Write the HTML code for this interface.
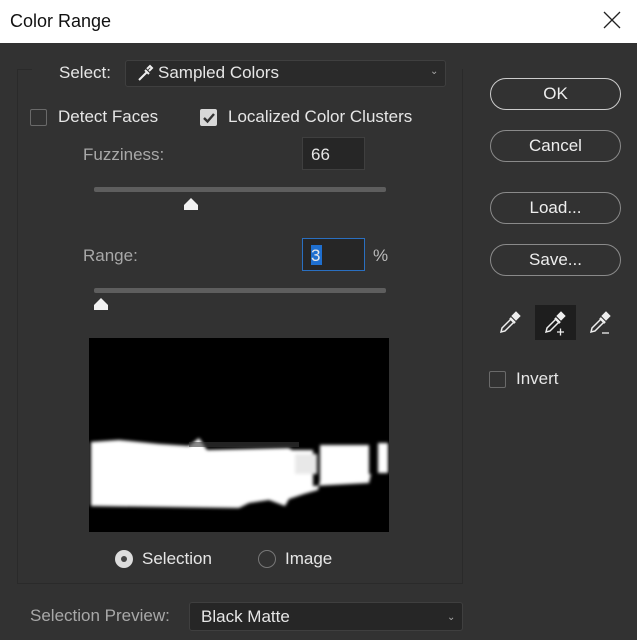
<!DOCTYPE html>
<html><head><style>
*{box-sizing:border-box;margin:0;padding:0}
body{width:637px;height:640px;background:#323232;font-family:"Liberation Sans",sans-serif;color:#e6e6e6;position:relative;overflow:hidden}
.a{position:absolute}
.t{font-size:17px;white-space:nowrap}
.btn{position:absolute;left:490px;width:131px;height:32px;border:1.5px solid #8a8a8a;border-radius:16px;text-align:center;line-height:29px;font-size:17px;color:#eee}
.cb{position:absolute;width:17px;height:17px;border:1px solid #6a6a6a;border-radius:2px}
.field{position:absolute;background:#262626;border:1px solid #3f3f3f}
</style></head><body>
<div class="a" style="left:0;top:0;width:637px;height:43px;background:#fff"></div>
<div class="a t" style="left:10px;top:11px;color:#111;font-size:18px">Color Range</div>
<svg class="a" style="left:603px;top:11px" width="18" height="18"><path d="M1 1L17 17M17 1L1 17" stroke="#222" stroke-width="1.3"/></svg>

<div class="a" style="left:17px;top:69px;width:446px;height:515px;border:1px solid #2a2a2a;border-top:none"></div>
<div class="a" style="left:17px;top:69px;width:15px;height:1px;background:#2a2a2a"></div>

<div class="a t" style="left:59px;top:63px">Select:</div>
<div class="field" style="left:125px;top:60px;width:321px;height:27px;border-radius:3px;background:#2a2a2a"></div>
<svg class="a" style="left:136px;top:64px" width="18" height="18"><path d="M3 16L11 8M9 6L13 10M11 5l3-3 2 2-3 3" stroke="#eee" stroke-width="2" fill="none"/></svg>
<div class="a t" style="left:158px;top:63px">Sampled Colors</div>
<div class="a" style="left:430px;top:66px;font-size:10px;color:#aaa">&#8964;</div>

<div class="cb" style="left:30px;top:109px"></div>
<div class="a t" style="left:58px;top:107px">Detect Faces</div>
<div class="cb" style="left:200px;top:109px;background:#d8d8d8;border-color:#d8d8d8"></div>
<svg class="a" style="left:201px;top:110px" width="16" height="16"><path d="M3 8l3.5 3.5L13 4" stroke="#333" stroke-width="2.4" fill="none"/></svg>
<div class="a t" style="left:228px;top:107px">Localized Color Clusters</div>

<div class="a t" style="left:83px;top:145px;color:#a8a8a8">Fuzziness:</div>
<div class="field" style="left:302px;top:137px;width:63px;height:33px"></div>
<div class="a t" style="left:311px;top:145px">66</div>
<div class="a" style="left:94px;top:187px;width:292px;height:5px;background:#5e5e5e;border-radius:2px"></div>
<svg class="a" style="left:183px;top:196px" width="16" height="15"><path d="M1 14V9L8 2L15 9V14Z" fill="#f2f2f2"/></svg>

<div class="a t" style="left:83px;top:246px;color:#a8a8a8">Range:</div>
<div class="field" style="left:302px;top:238px;width:63px;height:33px;border-color:#2a6fc0"></div>
<div class="a" style="left:311px;top:245px;width:11px;height:20px;background:#1f6fcf"></div>
<div class="a t" style="left:311px;top:246px">3</div>
<div class="a t" style="left:373px;top:246px;color:#bbb">%</div>
<div class="a" style="left:94px;top:288px;width:292px;height:5px;background:#5e5e5e;border-radius:2px"></div>
<svg class="a" style="left:93px;top:296px" width="16" height="15"><path d="M1 14V9L8 2L15 9V14Z" fill="#f2f2f2"/></svg>

<svg class="a" style="left:89px;top:338px" width="300" height="194">
<defs><filter id="b"><feGaussianBlur stdDeviation="1.6"/></filter></defs>
<rect width="300" height="194" fill="#000"/>
<g fill="#fff" filter="url(#b)">
<path d="M2 104L30 102L70 106L100 108L110 100L118 112L200 110L203 112L224 112V148L280 145L282 136L232 138L229 152L215 156L200 161L196 168L180 162L160 165L150 170L2 168Z"/>
<rect x="206" y="116" width="22" height="20" fill="#e8e8e8"/>
<rect x="231" y="107" width="49" height="38"/>
<rect x="289" y="105" width="10" height="30"/>
</g>
<g fill="#3a3a3a" opacity="0.6"><rect x="100" y="104" width="110" height="5"/></g>
</svg>

<div class="a" style="left:115px;top:550px;width:18px;height:18px;border-radius:50%;background:#ddd"></div>
<div class="a" style="left:121px;top:556px;width:6px;height:6px;border-radius:50%;background:#444"></div>
<div class="a t" style="left:142px;top:549px">Selection</div>
<div class="a" style="left:258px;top:550px;width:18px;height:18px;border-radius:50%;border:1px solid #777"></div>
<div class="a t" style="left:285px;top:549px">Image</div>

<div class="a t" style="left:30px;top:606px;color:#a8a8a8">Selection Preview:</div>
<div class="field" style="left:189px;top:602px;width:274px;height:29px;border-radius:3px"></div>
<div class="a t" style="left:201px;top:607px">Black Matte</div>
<div class="a" style="left:447px;top:612px;font-size:10px;color:#aaa">&#8964;</div>

<div class="btn" style="top:78px;border-color:#ccc">OK</div>
<div class="btn" style="top:130px">Cancel</div>
<div class="btn" style="top:192px">Load...</div>
<div class="btn" style="top:244px">Save...</div>

<div class="a" style="left:535px;top:305px;width:41px;height:35px;background:#1e1e1e"></div>
<svg class="a" style="left:497px;top:310px" width="26" height="26"><path d="M4 22L5 18L14 9L17 12L8 21Z" stroke="#eee" stroke-width="1.5" fill="none"/><path d="M13 8L18 13M16 6l3-3 3 3-3 3Z" stroke="#eee" stroke-width="2.4" fill="#eee"/></svg>
<svg class="a" style="left:542px;top:310px" width="30" height="28"><path d="M4 22L5 18L14 9L17 12L8 21Z" stroke="#eee" stroke-width="1.5" fill="none"/><path d="M13 8L18 13M16 6l3-3 3 3-3 3Z" stroke="#eee" stroke-width="2.4" fill="#eee"/><path d="M15 22h7M18.5 18.5v7" stroke="#eee" stroke-width="1.3"/></svg>
<svg class="a" style="left:587px;top:310px" width="30" height="28"><path d="M4 22L5 18L14 9L17 12L8 21Z" stroke="#eee" stroke-width="1.5" fill="none"/><path d="M13 8L18 13M16 6l3-3 3 3-3 3Z" stroke="#eee" stroke-width="2.4" fill="#eee"/><path d="M15 23h7" stroke="#eee" stroke-width="1.3"/></svg>

<div class="cb" style="left:489px;top:371px"></div>
<div class="a t" style="left:516px;top:369px">Invert</div>
</body></html>
